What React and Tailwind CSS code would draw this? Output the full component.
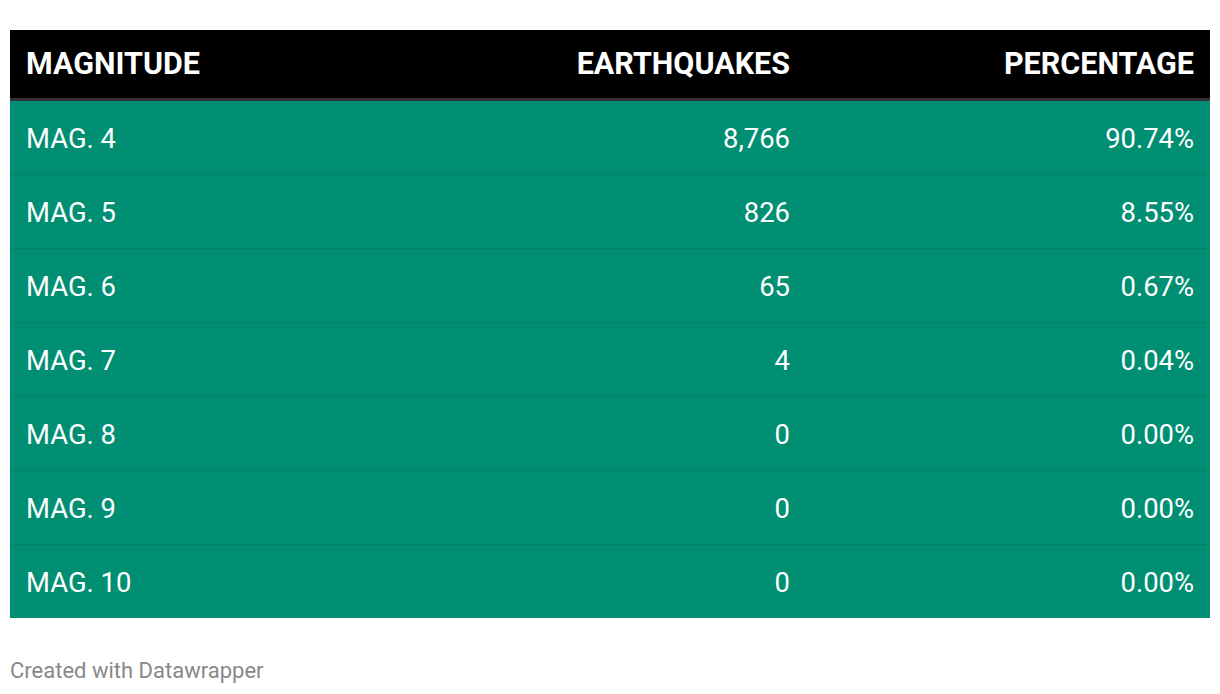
const rows = [
  ["MAG. 4", "8,766", "90.74%"],
  ["MAG. 5", "826", "8.55%"],
  ["MAG. 6", "65", "0.67%"],
  ["MAG. 7", "4", "0.04%"],
  ["MAG. 8", "0", "0.00%"],
  ["MAG. 9", "0", "0.00%"],
  ["MAG. 10", "0", "0.00%"],
];

export default function App() {
  return (
    <div className="w-[1220px] h-[694px] bg-white pt-[30px] px-[10px]" style={{ fontFamily: "Roboto, 'Liberation Sans', sans-serif" }}>
      <div className="w-[1200px]">
        <div className="grid grid-cols-[396px_400px_404px] h-[71px] bg-black border-b-[3px] border-[#333333] text-white font-bold text-[30.5px] items-center">
          <div className="pl-[16px]">MAGNITUDE</div>
          <div className="text-right pr-[16px]">EARTHQUAKES</div>
          <div className="text-right pr-[16px]">PERCENTAGE</div>
        </div>
        <div className="bg-[#008f73]">
          {rows.map((r, i) => (
            <div
              key={i}
              className={`grid grid-cols-[396px_400px_404px] items-center pt-[4px] text-white text-[27.4px] ${i < rows.length - 1 ? "h-[74px] border-b border-[#008469]" : "h-[73px]"}`}
            >
              <div className="pl-[16px]">{r[0]}</div>
              <div className="text-right pr-[16px]">{r[1]}</div>
              <div className="text-right pr-[16px]">{r[2]}</div>
            </div>
          ))}
        </div>
        <div className="mt-[39px] text-[22px] leading-[28px] text-[#888888]">Created with Datawrapper</div>
      </div>
    </div>
  );
}
